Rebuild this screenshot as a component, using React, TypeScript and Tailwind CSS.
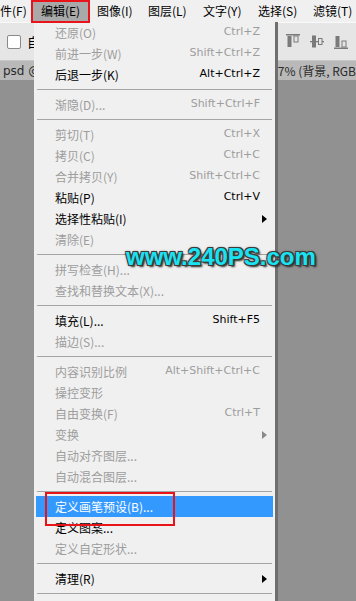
import React from 'react';

type Item =
  | { sep: true }
  | { label: string; key?: string; on?: boolean; sub?: boolean; hot?: boolean; sep?: false };

const items: Item[] = [
  { label: '还原(O)', key: 'Ctrl+Z' },
  { label: '前进一步(W)', key: 'Shift+Ctrl+Z' },
  { label: '后退一步(K)', key: 'Alt+Ctrl+Z', on: true },
  { sep: true },
  { label: '渐隐(D)...', key: 'Shift+Ctrl+F' },
  { sep: true },
  { label: '剪切(T)', key: 'Ctrl+X' },
  { label: '拷贝(C)', key: 'Ctrl+C' },
  { label: '合并拷贝(Y)', key: 'Shift+Ctrl+C' },
  { label: '粘贴(P)', key: 'Ctrl+V', on: true },
  { label: '选择性粘贴(I)', on: true, sub: true },
  { label: '清除(E)' },
  { sep: true },
  { label: '拼写检查(H)...' },
  { label: '查找和替换文本(X)...' },
  { sep: true },
  { label: '填充(L)...', key: 'Shift+F5', on: true },
  { label: '描边(S)...' },
  { sep: true },
  { label: '内容识别比例', key: 'Alt+Shift+Ctrl+C' },
  { label: '操控变形' },
  { label: '自由变换(F)', key: 'Ctrl+T' },
  { label: '变换', sub: true },
  { label: '自动对齐图层...' },
  { label: '自动混合图层...' },
  { sep: true },
  { label: '定义画笔预设(B)...', on: true, hot: true },
  { label: '定义图案...', on: true },
  { label: '定义自定形状...' },
  { sep: true },
  { label: '清理(R)', on: true, sub: true },
  { sep: true },
  { label: '' },
];

const cjk = "font-['Microsoft_YaHei','Noto_Sans_CJK_SC',sans-serif]";

function AlignIcon({ kind }: { kind: number }) {
  return (
    <svg width="14" height="15" viewBox="0 0 14 15" className="text-[#7a7a7a]">
      {kind === 0 && (
        <g fill="currentColor">
          <rect x="0" y="0" width="14" height="1.5" />
          <rect x="1.5" y="2" width="4" height="11" />
          <rect x="8" y="2" width="4" height="6" fill="none" stroke="currentColor" strokeWidth="1" />
        </g>
      )}
      {kind === 1 && (
        <g fill="currentColor">
          <rect x="0" y="7" width="14" height="1.3" />
          <rect x="2" y="1.5" width="4" height="12" />
          <rect x="8.5" y="4.5" width="3.5" height="6" fill="#e6e6e6" stroke="currentColor" strokeWidth="1" />
        </g>
      )}
      {kind === 2 && (
        <g fill="currentColor">
          <rect x="0" y="13.5" width="14" height="1.5" />
          <rect x="1.5" y="2" width="4" height="11" />
          <rect x="8" y="7" width="4" height="6" fill="none" stroke="currentColor" strokeWidth="1" />
        </g>
      )}
    </svg>
  );
}

export default function App() {
  return (
    <div className={`relative w-[356px] h-[601px] overflow-hidden bg-[#919191] ${cjk} text-[12px]`}>
      {/* Menu bar */}
      <div className="h-[22px] bg-[#f0f0f0] flex items-center text-black whitespace-nowrap">
        <div className="w-[31px] shrink-0 h-full flex items-center">件(F)</div>
        <div className="w-[59px] shrink-0 h-full flex items-center justify-center bg-[#a9a9a9]">编辑(E)</div>
        <div className="w-[51px] shrink-0 h-full flex items-center pl-[7px]">图像(I)</div>
        <div className="w-[55px] shrink-0 h-full flex items-center pl-[7px]">图层(L)</div>
        <div className="w-[55px] shrink-0 h-full flex items-center pl-[7px]">文字(Y)</div>
        <div className="w-[55px] shrink-0 h-full flex items-center pl-[7px]">选择(S)</div>
        <div className="w-[55px] shrink-0 h-full flex items-center pl-[7px]">滤镜(T)</div>
      </div>

      {/* Options bar */}
      <div className="h-[39px] bg-[#e6e6e6] border-t border-[#fafafa] border-b border-b-[#c8c8c8] flex items-center">
        <div className="ml-[7px] w-[14px] h-[14px] bg-white border border-[#8a8a8a] rounded-[2px]" />
        <span className="ml-[6px] text-[13px] text-black">自</span>
        <div className="ml-auto mr-[8px] flex items-center gap-[10px]">
          <AlignIcon kind={0} />
          <AlignIcon kind={1} />
          <AlignIcon kind={2} />
        </div>
      </div>

      {/* Document tab */}
      <div className="h-[19px] bg-[#b9b9b9] flex items-center justify-between text-[12px] text-[#2a2a2a] font-['DejaVu_Sans',sans-serif] whitespace-nowrap">
        <span className="ml-[3px]">psd @</span>
        <span className={cjk}>7% (背景, RGB</span>
      </div>

      {/* Edit dropdown */}
      <div className="absolute left-[34px] top-[22px] w-[244px] bg-[#f0f0f0] border-r-[3px] border-r-[#6f6f6f] pb-[20px] whitespace-nowrap">
        {items.map((it, i) =>
          it.sep ? (
            <div key={i} className="h-[9px] mx-[3px] flex flex-col">
              <div className="h-[4px]" />
              <div className="h-px bg-[#a5a5a5]" />
            </div>
          ) : (
            <div
              key={i}
              className={`relative h-[21px] mx-[2px] pl-[19px] pr-[13px] flex items-center justify-between ${
                it.hot ? 'bg-[#3399ff] text-white' : it.on ? 'text-black' : 'text-[#9d9d9d]'
              }`}
            >
              <span>{it.label}</span>
              {it.key && (
                <span className="font-['DejaVu_Sans',sans-serif] text-[11px]">{it.key}</span>
              )}
              {it.sub && (
                <span
                  className={`absolute right-[6px] top-[7px] w-0 h-0 border-y-[4px] border-y-transparent border-l-[5px] ${
                    it.on ? 'border-l-black' : 'border-l-[#8a8a8a]'
                  }`}
                />
              )}
            </div>
          )
        )}
      </div>

      {/* Annotation boxes */}
      <div className="absolute left-[31px] top-0 w-[59px] h-[23px] border-2 border-[#e8141a]" />
      <div className="absolute left-[45px] top-[492px] w-[130px] h-[34px] border-2 border-[#e8141a]" />

      {/* Watermark */}
      <div className="absolute left-[126px] top-[239px] font-['Liberation_Sans',Arial,sans-serif] font-bold text-[24px] text-[#19e3f3] [text-shadow:1px_1px_0_#3a3a3a,-1px_-1px_0_#3a3a3a,1px_-1px_0_#3a3a3a,-1px_1px_0_#3a3a3a,2px_2px_2px_#2a2a2a,0_0_3px_#333]">
        www.240PS.com
      </div>
    </div>
  );
}
